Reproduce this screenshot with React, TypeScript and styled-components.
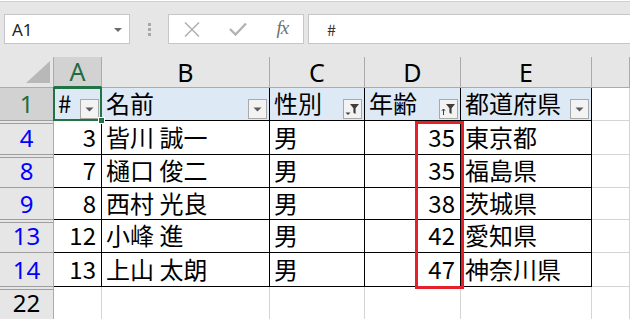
import React from 'react';
import styled, { createGlobalStyle, css } from 'styled-components';

const GlobalStyle = createGlobalStyle`
    html, body {
        margin: 0;
        padding: 0;
        background: #ffffff;
    }
    body {
        font-family: "Noto Sans", "Noto Sans CJK JP", sans-serif;
        overflow: hidden;
    }
`;

const Page = styled.div`
    width: 630px;
    height: 319px;
    overflow: hidden;
    background: #ffffff;
    padding-top: 1px;
    box-sizing: border-box;
`;

// ---------- formula bar ----------

const Toolbar = styled.div`
    height: 56px;
    box-sizing: border-box;
    display: flex;
    align-items: flex-start;
    padding: 12px 0 0 4px;
    background: #e6e6e6;
    border-top: 1px solid #d0d0d0;
`;

const NameBox = styled.div`
    width: 126px;
    height: 30px;
    box-sizing: border-box;
    display: flex;
    align-items: center;
    justify-content: space-between;
    padding: 0 7px 0 7px;
    background: #ffffff;
    border: 1px solid #c6c6c6;
    font-size: 17px;
    color: #262626;
`;

const DropArrow = styled.span`
    width: 0;
    height: 0;
    border-left: 4px solid transparent;
    border-right: 4px solid transparent;
    border-top: 4px solid #6b6b6b;
    margin-top: 2px;
`;

const Grip = styled.div`
    margin-left: 18px;
    height: 30px;
    display: flex;
    flex-direction: column;
    justify-content: center;
    gap: 2px;
`;

const GripDot = styled.span`
    width: 3px;
    height: 3px;
    background: #a8a8a8;
`;

const FuncBox = styled.div`
    margin-left: 17px;
    width: 136px;
    height: 30px;
    box-sizing: border-box;
    display: flex;
    align-items: center;
    justify-content: space-around;
    background: #ffffff;
    border: 1px solid #c6c6c6;
`;

const FxText = styled.span`
    font-family: "Liberation Serif", serif;
    font-style: italic;
    font-size: 19px;
    color: #6f6f6f;
    letter-spacing: -1px;
    margin-top: -2px;
`;

const FormulaInput = styled.div`
    margin-left: 4px;
    flex: 1;
    height: 30px;
    box-sizing: border-box;
    display: flex;
    align-items: center;
    padding-left: 18px;
    background: #ffffff;
    border: 1px solid #c6c6c6;
    border-right: none;
    font-family: "Noto Sans CJK JP", sans-serif;
    font-size: 16px;
    color: #333333;
`;

// ---------- sheet ----------

const Sheet = styled.div`
    display: grid;
    grid-template-columns: 54px 48px 168px 95px 96px 131px 1fr;
    grid-template-rows: 31px 33px 34px 33px 32px 33px 34px 33px;
    font-family: "Noto Sans CJK JP", sans-serif;
    font-size: 24px;
    color: #000000;
`;

const Corner = styled.div`
    display: flex;
    align-items: flex-end;
    justify-content: flex-end;
    padding: 0 3px 4px 0;
    background: #e6e6e6;
    border-right: 1px solid #ababab;
    border-bottom: 1px solid #ababab;
`;

const CornerTriangle = styled.div`
    width: 0;
    height: 0;
    border-left: 24px solid transparent;
    border-bottom: 22px solid #b8b8b8;
`;

const ColHeader = styled.div<{ $active?: boolean }>`
    display: flex;
    align-items: center;
    justify-content: center;
    font-family: "Noto Sans", sans-serif;
    font-size: 25px;
    line-height: 1;
    background: ${p => (p.$active ? '#d2d2d2' : '#e6e6e6')};
    color: ${p => (p.$active ? '#1e6b41' : '#000000')};
    border-right: 1px solid #ababab;
    border-bottom: ${p => (p.$active ? '2px solid #217346' : '1px solid #ababab')};
`;

type RowTone = 'active' | 'filtered' | 'plain';

const rowColors: Record<RowTone, string> = {
    active: '#1e6b41',
    filtered: '#0000ff',
    plain: '#000000',
};

const RowHeader = styled.div<{ $tone: RowTone; $gapAbove?: boolean }>`
    display: flex;
    align-items: center;
    justify-content: center;
    font-family: "Noto Sans", sans-serif;
    font-size: 24px;
    line-height: 1;
    background: ${p => (p.$tone === 'active' ? '#d2d2d2' : '#e6e6e6')};
    color: ${p => rowColors[p.$tone]};
    border-right: 1px solid #ababab;
    border-bottom: 1px solid #9e9e9e;
    ${p => p.$gapAbove && css`
        box-shadow: inset 0 2px 0 #e6e6e6, inset 0 3px 0 #9e9e9e;
    `}
`;

const HeadCell = styled.div<{ $selected?: boolean }>`
    position: relative;
    display: flex;
    align-items: center;
    justify-content: space-between;
    padding: 0 2px 0 4px;
    background: #dde9f5;
    border-right: 1px solid #000000;
    border-bottom: 1px solid #000000;
    white-space: nowrap;
    ${p => p.$selected && css`
        z-index: 2;
        &::after {
            content: '';
            position: absolute;
            top: -1px;
            left: -1px;
            right: -1px;
            bottom: -1px;
            border: 2px solid #217346;
        }
        &::before {
            content: '';
            position: absolute;
            right: -4px;
            bottom: -4px;
            width: 5px;
            height: 5px;
            background: #217346;
            border: 1px solid #ffffff;
            z-index: 1;
        }
    `}
`;

const HeadLabel = styled.span`
    line-height: 1;
    margin-top: -3px;
`;

const FilterButton = styled.span`
    align-self: flex-end;
    margin-bottom: 1px;
    width: 19px;
    height: 20px;
    box-sizing: border-box;
    display: flex;
    align-items: center;
    justify-content: center;
    background: #f3f3f3;
    border: 1px solid #a9a9a9;
    flex-shrink: 0;
`;

const DataCell = styled.div<{ $num?: boolean }>`
    position: relative;
    display: flex;
    align-items: center;
    justify-content: ${p => (p.$num ? 'flex-end' : 'flex-start')};
    padding: ${p => (p.$num ? '0 5px 2px 0' : '0 0 2px 4px')};
    background: #ffffff;
    border-right: 1px solid #000000;
    border-bottom: 1px solid #000000;
    white-space: nowrap;
    line-height: 1;
`;

const GridCell = styled.div`
    background: #ffffff;
    border-right: 1px solid #d4d4d4;
    border-bottom: 1px solid #d4d4d4;
`;

const Highlight = styled.div`
    position: absolute;
    top: 0;
    right: -4px;
    width: 49px;
    height: 168px;
    box-sizing: border-box;
    border: 3px solid #e5202a;
    z-index: 3;
    pointer-events: none;
`;

// ---------- icons ----------

const DropIcon = () => (
    <svg width="9" height="5" viewBox="0 0 9 5">
        <path d="M0.5 0.5 H8.5 L4.5 4.5 Z" fill="#5a5a5a" />
    </svg>
);

const FunnelIcon = ({ sorted }: { sorted?: boolean }) => (
    <svg width="17" height="16" viewBox="0 0 17 16">
        <path d="M6 3 H15 L11.6 7.2 V13 L9.4 11.8 V7.2 Z" fill="#3f3f3f" />
        {sorted ? (
            <g stroke="#3f3f3f" strokeWidth="1" fill="none">
                <path d="M3.5 14 V8" />
                <path d="M1.8 9.8 L3.5 8 L5.2 9.8" />
            </g>
        ) : (
            <path d="M1.5 11.5 H6.5 L4 14 Z" fill="#3f3f3f" />
        )}
    </svg>
);

const CrossIcon = () => (
    <svg width="16" height="15" viewBox="0 0 16 15">
        <path d="M1 0.5 L15 14.5 M15 0.5 L1 14.5" stroke="#b3b3b3" strokeWidth="1.6" />
    </svg>
);

const CheckIcon = () => (
    <svg width="18" height="14" viewBox="0 0 18 14">
        <path d="M1 7 L6.5 12.5 L17 1.5" stroke="#b3b3b3" strokeWidth="2.4" fill="none" />
    </svg>
);

type FilterKind = 'plain' | 'filtered' | 'sorted';

const Filter: React.FC<{ kind: FilterKind }> = ({ kind }) => (
    <FilterButton>
        {kind === 'plain' ? <DropIcon /> : <FunnelIcon sorted={kind === 'sorted'} />}
    </FilterButton>
);

// ---------- data ----------

interface Person {
    row: number;
    id: number;
    name: string;
    sex: string;
    age: number;
    pref: string;
    gapAbove: boolean;
}

const people: Person[] = [
    { row: 4, id: 3, name: '皆川 誠一', sex: '男', age: 35, pref: '東京都', gapAbove: true },
    { row: 8, id: 7, name: '樋口 俊二', sex: '男', age: 35, pref: '福島県', gapAbove: true },
    { row: 9, id: 8, name: '西村 光良', sex: '男', age: 38, pref: '茨城県', gapAbove: false },
    { row: 13, id: 12, name: '小峰 進', sex: '男', age: 42, pref: '愛知県', gapAbove: true },
    { row: 14, id: 13, name: '上山 太朗', sex: '男', age: 47, pref: '神奈川県', gapAbove: false },
];

const headers: { label: string; filter: FilterKind }[] = [
    { label: '#', filter: 'plain' },
    { label: '名前', filter: 'plain' },
    { label: '性別', filter: 'filtered' },
    { label: '年齢', filter: 'sorted' },
    { label: '都道府県', filter: 'plain' },
];

const App: React.FC = () => {
    return (
        <Page>
            <GlobalStyle />
            <Toolbar>
                <NameBox>
                    <span>A1</span>
                    <DropArrow />
                </NameBox>
                <Grip>
                    <GripDot />
                    <GripDot />
                    <GripDot />
                </Grip>
                <FuncBox>
                    <CrossIcon />
                    <CheckIcon />
                    <FxText>fx</FxText>
                </FuncBox>
                <FormulaInput>#</FormulaInput>
            </Toolbar>

            <Sheet>
                <Corner><CornerTriangle /></Corner>
                {['A', 'B', 'C', 'D', 'E', ''].map((c, i) => (
                    <ColHeader key={i} $active={c === 'A'}>{c}</ColHeader>
                ))}

                <RowHeader $tone="active">1</RowHeader>
                {headers.map((h, i) => (
                    <HeadCell key={h.label} $selected={i === 0}>
                        <HeadLabel>{h.label}</HeadLabel>
                        <Filter kind={h.filter} />
                    </HeadCell>
                ))}
                <GridCell />

                {people.map((p, i) => (
                    <React.Fragment key={p.row}>
                        <RowHeader $tone="filtered" $gapAbove={p.gapAbove}>{p.row}</RowHeader>
                        <DataCell $num>{p.id}</DataCell>
                        <DataCell>{p.name}</DataCell>
                        <DataCell>{p.sex}</DataCell>
                        <DataCell $num>
                            {p.age}
                            {i === 0 && <Highlight />}
                        </DataCell>
                        <DataCell>{p.pref}</DataCell>
                        <GridCell />
                    </React.Fragment>
                ))}

                <RowHeader $tone="plain" $gapAbove>22</RowHeader>
                {[0, 1, 2, 3, 4, 5].map(i => <GridCell key={i} />)}
            </Sheet>
        </Page>
    );
};

export default App;
